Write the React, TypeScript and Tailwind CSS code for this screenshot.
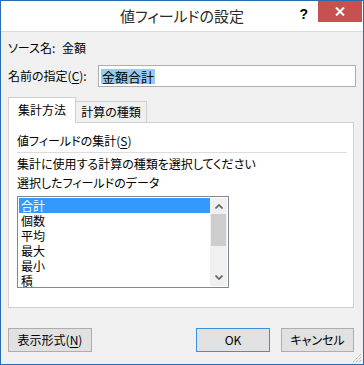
const items = ['合計', '個数', '平均', '最大', '最小', '積']

function Ul({ c }: { c: string }) {
  return <span className="underline underline-offset-2">{c}</span>
}

export default function App() {
  return (
    <div className="relative flex h-[365px] w-[364px] flex-col border border-[#2b6cb0] bg-[#f0f0f0] text-[12px] text-black [font-family:'Noto_Sans_CJK_JP',sans-serif] [font-feature-settings:'palt']">
      {/* title bar */}
      <div className="grid h-[31px] grid-cols-[1fr_auto_1fr] border-b border-[#dadada] bg-white">
        <div />
        <div className="pt-[5px] text-[15px] leading-[20px] text-[#2b2b2b]">値フィールドの設定</div>
        <div className="flex items-start justify-end">
          <span className="mr-[10px] mt-[3px] text-[14px] font-bold leading-[20px] [font-family:'Liberation_Sans',sans-serif]">?</span>
          <div className="mr-px flex h-[21px] w-[44px] items-center justify-center bg-[#c75050]">
            <svg width="10" height="9" viewBox="0 0 10 9">
              <path d="M1 0.5 L9 8.5 M9 0.5 L1 8.5" stroke="white" strokeWidth="2" />
            </svg>
          </div>
        </div>
      </div>

      <div className="flex-1 px-[7px]">
        <div className="mt-[8px] flex h-[16px] leading-[16px]">
          <span className="w-[54px]">ソース名:</span>
          <span>金額</span>
        </div>

        <div className="mt-[9px] flex h-[22px] items-center">
          <span className="w-[90px]">
            名前の指定(<Ul c="C" />):
          </span>
          <div className="flex h-[22px] w-[258px] items-center border border-[#abadb3] bg-white pl-[2px]">
            <span className="bg-[#99c9ef] px-px text-[13px] leading-[15px]">金額合計</span>
          </div>
        </div>

        {/* tabs */}
        <div className="mt-[10px] flex h-[25px] items-end">
          <div className="relative z-10 -mb-px flex h-[26px] w-[68px] items-center justify-center border border-b-0 border-[#d0d0d0] bg-white pb-[2px]">
            集計方法
          </div>
          <div className="flex h-[21px] w-[71px] items-center justify-center border border-b-0 border-l-0 border-[#d0d0d0] bg-[#f0f0f0]">
            計算の種類
          </div>
        </div>

        <div className="h-[186px] w-[346px] border border-[#d0d0d0] bg-white pl-[8px]">
          <div className="mt-[10px] leading-[16px]">
            値フィールドの集計(<Ul c="S" />)
          </div>
          <div className="mt-[3px] h-px w-[330px] bg-[#dcdcdc]" />
          <div className="mt-[3px] leading-[16px]">集計に使用する計算の種類を選択してください</div>
          <div className="mt-[3px] leading-[16px]">選択したフィールドのデータ</div>

          <div className="mt-[5px] flex h-[92px] w-[212px] border border-[#828790] p-px">
            <div className="flex-1">
              {items.map((t, i) => (
                <div
                  key={t}
                  className={
                    i === 0
                      ? 'h-[15px] bg-[#3399ff] pl-[2px] leading-[15px] text-white'
                      : 'h-[15px] pl-[2px] leading-[15px]'
                  }
                >
                  {t}
                </div>
              ))}
            </div>
            <div className="flex w-[17px] flex-col bg-[#f0f0f0]">
              <div className="flex h-[16px] items-center justify-center">
                <svg width="8" height="5" viewBox="0 0 8 5">
                  <path d="M0.5 4.5 L4 1 L7.5 4.5" stroke="#606060" strokeWidth="1.6" fill="none" />
                </svg>
              </div>
              <div className="mx-auto h-[32px] w-[15px] bg-[#cdcdcd]" />
              <div className="flex-1" />
              <div className="flex h-[17px] items-center justify-center">
                <svg width="8" height="5" viewBox="0 0 8 5">
                  <path d="M0.5 0.5 L4 4 L7.5 0.5" stroke="#606060" strokeWidth="1.6" fill="none" />
                </svg>
              </div>
            </div>
          </div>
        </div>

        {/* buttons */}
        <div className="mt-[20px] flex w-[346px]">
          <div className="flex h-[24px] w-[84px] items-center justify-center border border-[#adadad] bg-[#e1e1e1]">
            表示形式(<Ul c="N" />)
          </div>
          <div className="ml-auto flex h-[24px] w-[74px] items-center justify-center border border-[#3c8fdc] bg-[#e1e1e1]">
            OK
          </div>
          <div className="ml-[11px] flex h-[24px] w-[73px] items-center justify-center border border-[#adadad] bg-[#e1e1e1]">
            キャンセル
          </div>
        </div>
      </div>

      <svg className="absolute bottom-px right-px" width="12" height="12" viewBox="0 0 12 12">
        <path d="M11 3 L3 11 M11 6 L6 11 M11 9 L9 11" stroke="#a0a0a0" strokeWidth="1" strokeDasharray="1 1" />
      </svg>
    </div>
  )
}
